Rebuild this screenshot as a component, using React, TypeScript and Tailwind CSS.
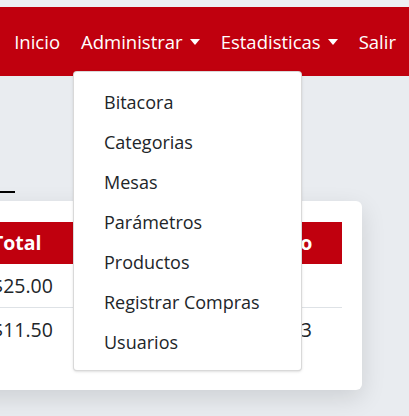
import type { ReactNode } from 'react'

const adminItems = [
  'Bitacora',
  'Categorias',
  'Mesas',
  'Parámetros',
  'Productos',
  'Registrar Compras',
  'Usuarios',
]

function Caret() {
  return (
    <span className="ml-[7px] inline-block h-0 w-0 border-x-[5px] border-t-[6px] border-x-transparent border-t-white align-middle" />
  )
}

function NavItem({ children, caret }: { children: ReactNode; caret?: boolean }) {
  return (
    <li className="flex items-center whitespace-nowrap">
      {children}
      {caret && <Caret />}
    </li>
  )
}

export default function App() {
  return (
    <div
      className="relative h-[416px] w-[409px] overflow-hidden bg-[#e9ecf0] text-[#212529]"
      style={{ fontFamily: '"Open Sans", "Noto Sans", sans-serif' }}
    >
      <div className="h-[7px] bg-[#edf0f4]" />

      <nav className="relative flex h-[69px] items-center justify-end bg-[#c0000e] pr-[13px] text-[18.5px] text-white">
        <ul className="flex items-center gap-[21px]">
          <NavItem>Inicio</NavItem>
          <NavItem caret>Administrar</NavItem>
          <NavItem caret>Estadisticas</NavItem>
          <NavItem>Salir</NavItem>
        </ul>

        {/* menu desplegable de Administrar */}
        <div className="absolute left-[73px] top-[64px] z-10 w-[229px] rounded-[4px] border border-black/15 bg-white pb-[8px] pt-[10px] text-[18px] text-[#212529] shadow-sm">
          {adminItems.map(item => (
            <div key={item} className="flex h-[40px] items-center pl-[30px]">
              {item}
            </div>
          ))}
        </div>
      </nav>

      <div className="mt-[115px] h-[2px] w-[15px] bg-black" />

      <div className="ml-[-120px] mt-[8px] h-[189px] w-[482px] rounded-[6px] bg-white px-[20px] pt-[21px] text-[19.5px] shadow-[0_8px_24px_rgba(0,0,0,0.12)]">
        <div className="flex h-[42px] items-center bg-[#c0000e] font-bold text-white">
          <div className="w-[80px] pl-[12px]">Fecha</div>
          <div className="w-[255px] pl-[12px]">Total</div>
          <div className="flex-1 pl-[12px]">Estado</div>
        </div>
        <div className="flex h-[44px] items-center border-b border-[#dee2e6]">
          <div className="w-[80px] pl-[12px]">12/05</div>
          <div className="w-[255px] pl-[12px]">$25.00</div>
          <div className="flex-1 pl-[12px]">Caja</div>
        </div>
        <div className="flex h-[44px] items-center">
          <div className="w-[80px] pl-[12px]">12/05</div>
          <div className="w-[255px] pl-[12px]">$11.50</div>
          <div className="flex-1 pl-[12px]">Mesa 3</div>
        </div>
      </div>
    </div>
  )
}
